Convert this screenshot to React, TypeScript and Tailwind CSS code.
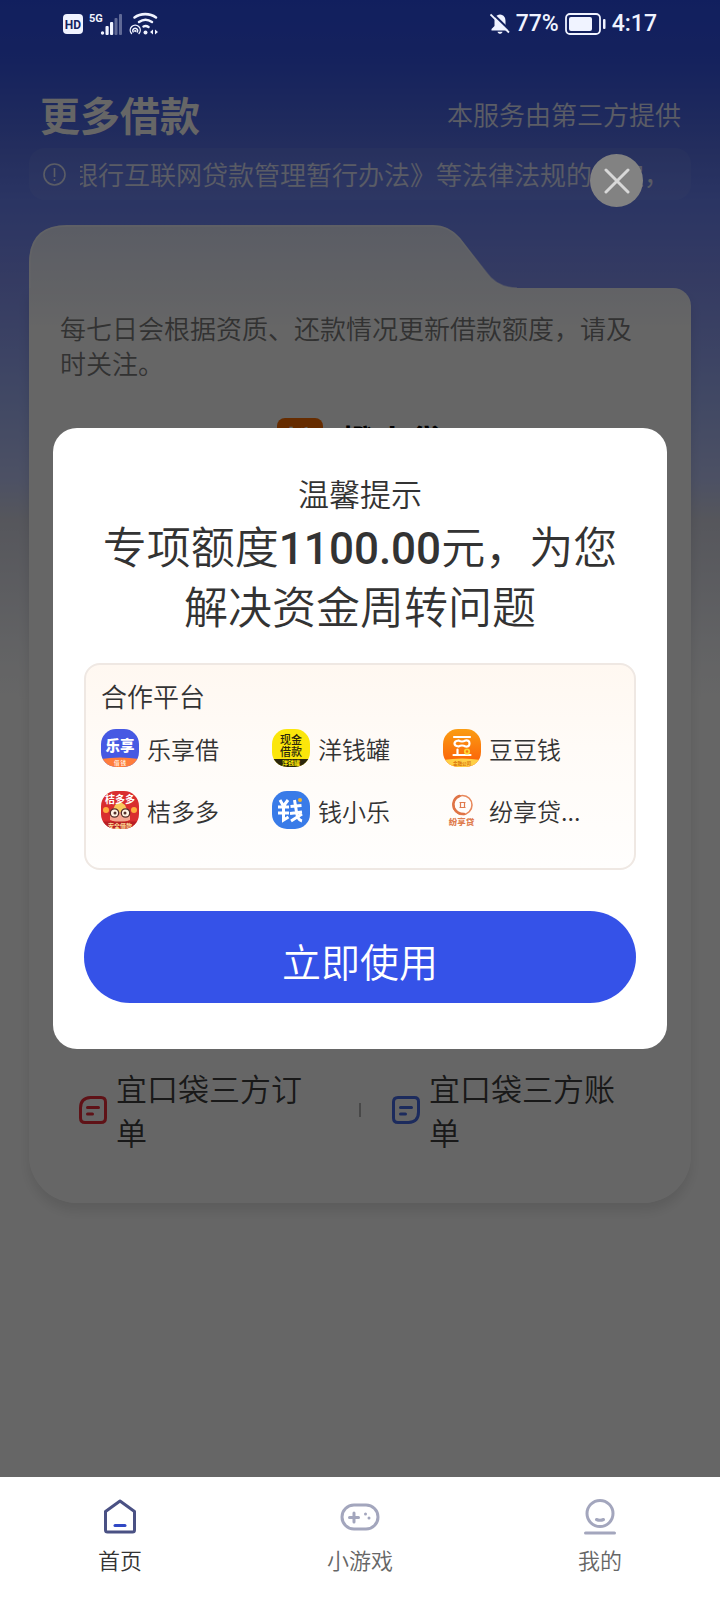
import React from "react";

const cjk = "font-['Noto_Sans_CJK_SC',sans-serif]";
const latin = "font-[Roboto,'Noto_Sans_CJK_SC',sans-serif]";

const svgFont = "'Noto Sans CJK SC', sans-serif";

function StatusBar() {
  return (
    <header className={`relative z-20 flex h-12 items-center justify-between px-[63px] text-[#f0f3ff] ${latin}`}>
      <div className="flex items-center gap-[6px]">
        <svg width="20" height="20" viewBox="0 0 20 20" aria-label="HD">
          <rect width="20" height="20" rx="4" fill="#f0f3ff" />
          <text x="10" y="14.500" fontFamily="Roboto, sans-serif" fontSize="12" fontWeight="700" textAnchor="middle" fill="#14225f">HD</text>
        </svg>
        <svg width="34" height="24" viewBox="0 0 34 24" aria-label="5G">
          <text x="0" y="10" fontFamily="Roboto, sans-serif" fontSize="11" fontWeight="700" fill="#f0f3ff">5G</text>
          <circle cx="13.500" cy="21" r="1.700" fill="#f0f3ff" />
          <g fill="#f0f3ff">
            <rect x="16.500" y="14" width="3.200" height="9" rx="1" />
            <rect x="21" y="10" width="3.200" height="13" rx="1" />
            <rect x="25.500" y="6" width="3" height="17" rx="1" opacity=".35" />
            <rect x="30" y="2" width="3" height="21" rx="1" opacity=".35" />
          </g>
        </svg>
        <svg width="30" height="24" viewBox="0 0 30 24" fill="none" stroke="#f0f3ff" strokeLinecap="round" aria-label="Wi-Fi">
          <path d="M5.500 5.500c6-4.500 15.500-4.500 21.500 0" strokeWidth="2.600" />
          <path d="M10 10c4-2.800 9-2.800 13 0M14.500 14.500c1.700-.9 3.500-.6 5 .5" strokeWidth="2.500" />
          <path d="M2.500 21.500a5 5 0 1 1 7.500 0M4.200 20a2.400 2.400 0 1 1 4 0" strokeWidth="1.400" />
          <circle cx="6.200" cy="19" r=".7" fill="#f0f3ff" />
          <circle cx="16.500" cy="20.500" r="2" fill="#f0f3ff" stroke="none" />
          <path d="M24 17.500v5l-3-2.500zM26 17.500v5l3-2.500z" fill="#f0f3ff" stroke="none" />
        </svg>
      </div>
      <div className="flex items-center gap-[6px] text-[23px] font-medium leading-6">
        <svg width="20" height="22" viewBox="0 0 20 22" aria-label="静音">
          <path d="M10 1.500c4 .5 5.500 3 5.500 6.500v5l2.500 3v1.500H1.500V16L4.500 13V8C4.500 4.500 6 2 10 1.500z" fill="#f0f3ff" />
          <path d="M7.500 18.800h5c-.7 2.700-4.300 2.700-5 0z" fill="#f0f3ff" />
          <path d="M2 0 20.500 18" stroke="#14225f" strokeWidth="2.200" />
          <path d="M.5 1.500 19 19.500" stroke="#f0f3ff" strokeWidth="1.800" />
        </svg>
        <span>77%</span>
        <svg width="41" height="22" viewBox="0 0 41 22" aria-label="电量">
          <rect x="1" y="1" width="34" height="20" rx="4" fill="none" stroke="#f0f3ff" strokeWidth="1.800" />
          <rect x="4" y="4" width="23" height="14" rx="2" fill="#f0f3ff" />
          <rect x="38" y="6" width="2.500" height="10" rx="1" fill="#f0f3ff" />
        </svg>
        <span>4:17</span>
      </div>
    </header>
  );
}

function NoticeBar() {
  return (
    <div className="mx-[29px] mt-[7px] flex h-[52px] items-center rounded-[16px] bg-white/5 pl-[14px] pr-6 text-white/80">
      <svg className="shrink-0" width="23" height="23" viewBox="0 0 23 23" fill="none" stroke="currentColor" strokeWidth="1.600">
        <circle cx="11.500" cy="11.500" r="10.500" />
        <path d="M11.500 5v9M11.500 16v2" />
      </svg>
      <div className="ml-[14px] flex-1 overflow-hidden whitespace-nowrap text-[26px] leading-[38px]">
        <p className="-ml-2">银行互联网贷款管理暂行办法》等法律法规的规定，</p>
      </div>
    </div>
  );
}

function OrderIcon({ mirrored = false, color }: { mirrored?: boolean; color: string }) {
  return (
    <svg className="shrink-0" width="28" height="28" viewBox="0 0 28 28" fill="none" stroke={color} strokeWidth="3" strokeLinecap="round">
      {mirrored ? (
        <path d="M6 1.500h16.500q4 0 4 4V16q0 10-10 10.500H6q-4.500 0-4.500-4.500V6Q1.500 1.500 6 1.500z" />
      ) : (
        <path d="M11.500 1.500H22q4.500 0 4.500 4.500v16q0 4.500-4.500 4.500H6q-4.500 0-4.500-4.500V12q0-10 10-10.500z" />
      )}
      <path d="M8.500 11.500h11M8.500 18h5" />
    </svg>
  );
}

function LoanCard() {
  return (
    <section className="mx-[29px] mt-[25px]">
      <svg className="block h-[63px] w-full" viewBox="0 0 662 63" preserveAspectRatio="none">
        <defs>
          <linearGradient id="tab" gradientUnits="userSpaceOnUse" x1="0" y1="0" x2="0" y2="105">
            <stop offset="0" stopColor="#e2e7fb" />
            <stop offset="1" stopColor="#ffffff" />
          </linearGradient>
        </defs>
        <path d="M0 63V38Q0 0 38 0H404Q420 0 431 13L457 47Q468 63 488 63Z" fill="url(#tab)" />
        <path d="M1 63V38Q1 1 38 1H404Q420 1 431 14L457 47Q468 63 488 63" fill="none" stroke="#fff" strokeOpacity=".5" strokeWidth="1.500" />
      </svg>
      <div className="flex h-[915px] flex-col rounded-b-[48px] rounded-tr-[18px] bg-[linear-gradient(#f3f5fd,#fff_42px)] px-[31px] pt-[22px] shadow-[0_8px_12px_rgba(0,0,0,0.1)]">
        <p className="pr-3 text-[26px] leading-[35px] text-[#7d7d7d]">每七日会根据资质、还款情况更新借款额度，请及时关注。</p>
        <div className="mt-[38px] flex items-center justify-center gap-[18px]">
          <svg width="46" height="46" viewBox="0 0 46 46">
            <rect width="46" height="46" rx="8" fill="#ff6f00" />
            <text x="23" y="34" fontFamily={svgFont} fontSize="30" fontWeight="700" textAnchor="middle" fill="#fff">橙</text>
          </svg>
          <h2 className="text-[34px] font-bold leading-[40px] text-black">橙小贷</h2>
        </div>
        <div className="mb-[49px] mt-auto flex items-center pl-[19px] text-[31px] leading-[44px] text-[#404040]">
          <a href="#orders" className="flex w-[280px] items-center gap-[9px]">
            <OrderIcon color="#ee2e3a" />
            <span className="w-[188px]">宜口袋三方订单</span>
          </a>
          <span className="mr-[31px] h-[14px] w-[2px] bg-[#b5b5b5]" />
          <a href="#bills" className="flex items-center gap-[9px]">
            <OrderIcon mirrored color="#466be8" />
            <span className="w-[188px]">宜口袋三方账单</span>
          </a>
        </div>
      </div>
    </section>
  );
}

const logos: Record<string, React.ReactNode> = {
  lexiang: (
    <>
      <rect width="38" height="38" fill="#4659e3" />
      <path d="M0 30q19-3 38 0v8H0z" fill="#ff7d3c" />
      <text x="19" y="22" fontSize="14.500" fontWeight="900" fill="#fff">乐享</text>
      <text x="19" y="36" fontSize="5.500" fontWeight="700" fill="#ffe8d8">借 钱</text>
    </>
  ),
  yang: (
    <>
      <rect width="38" height="38" fill="#fbe60b" />
      <rect y="30" width="38" height="8" fill="#2b260c" />
      <text x="19" y="14.500" fontSize="11" fontWeight="500" fill="#2b260c">现金</text>
      <text x="19" y="27" fontSize="11" fontWeight="500" fill="#2b260c">借款</text>
      <text x="19" y="36" fontSize="6" fontWeight="700" fill="#fbe60b">洋钱罐</text>
    </>
  ),
  dou: (
    <>
      <defs>
        <linearGradient id="dou" x1="0" y1="0" x2="0" y2="1">
          <stop offset="0" stopColor="#fb9d12" />
          <stop offset="1" stopColor="#fb5b08" />
        </linearGradient>
      </defs>
      <rect width="38" height="38" fill="url(#dou)" />
      <path d="M0 31q19-3 38 0v7H0z" fill="#ffcf45" />
      <g fill="none" stroke="#fff" strokeWidth="2.200" strokeLinecap="round">
        <path d="M11 8h16M10.500 26h17M14.500 20.500v5" />
        <path d="M15.500 11.500q3.500 2 7 0 4-.5 4 3t-4 3q-3.500-2-7 0-4-.5-4-3t4-3z" />
      </g>
      <circle cx="24" cy="22.500" r="2.200" fill="#fb7a0c" stroke="#ffd22e" strokeWidth="1.800" />
      <text x="19" y="36" fontSize="4.500" fontWeight="700" fill="#d9740a">金融公司</text>
    </>
  ),
  jie: (
    <>
      <rect width="38" height="38" fill="#d92d2f" />
      <circle cx="5" cy="19" r="3" fill="#ffab3d" />
      <circle cx="33" cy="19" r="3" fill="#ffab3d" />
      <path d="M14 14q5-5 10 0l5 12q0 5-10 5T9 26z" fill="#f8c95c" />
      <path d="M9 25q10-8 20 0v4q-10 4-20 0z" fill="#f6a58f" />
      <text x="19" y="12" fontSize="10" fontWeight="700" fill="#fff">桔多多</text>
      <g fill="#fff3e4" stroke="#56302a" strokeWidth="1.300">
        <circle cx="13.500" cy="22" r="4.200" />
        <circle cx="24.500" cy="22" r="4.200" />
      </g>
      <circle cx="14" cy="22" r="1.500" fill="#56302a" />
      <circle cx="24" cy="22" r="1.500" fill="#56302a" />
      <path d="M0 30.500h38V38H0z" fill="#b91f24" />
      <text x="19" y="36.500" fontSize="6" fontWeight="700" fill="#ffe29c">安全借款</text>
    </>
  ),
  qian: (
    <>
      <rect width="38" height="38" fill="#397be8" />
      <g fill="none" stroke="#fff" strokeWidth="3">
        <path d="M8 9l3.500 6L16 9M6 16h11M6 22h11M11.500 15v14l5-3" />
        <path d="M18.500 15.500l11-1M18 22.500l12-1.500M22.500 9l2 12q1 8 5.500 9M30 23l-11 7" />
      </g>
      <circle cx="28" cy="9" r="2" fill="#f5b72d" />
    </>
  ),
  fen: (
    <>
      <circle cx="19.500" cy="14" r="9.500" fill="none" stroke="#e8895c" strokeWidth="1.600" />
      <path d="M16.500 5a9 9 0 0 0-5.500 12q3 6 10 6" fill="none" stroke="#df7446" strokeWidth="2.600" strokeLinecap="round" />
      <path d="M16.500 11.500h6M16.500 16.500h6M17.500 11.500v5M21.500 11.500v5" stroke="#e07a4c" strokeWidth="1.200" />
      <text x="18.500" y="33.500" fontSize="8.500" fontWeight="900" fill="#df7d50">纷享贷</text>
    </>
  ),
};

const partners = [
  { id: "lexiang", name: "乐享借" },
  { id: "yang", name: "洋钱罐" },
  { id: "dou", name: "豆豆钱" },
  { id: "jie", name: "桔多多" },
  { id: "qian", name: "钱小乐" },
  { id: "fen", name: "纷享贷..." },
];

function PromoDialog() {
  return (
    <div role="dialog" aria-modal="true" aria-labelledby="promo-title" className="relative w-full rounded-[24px] bg-white px-[31px] pb-[46px] pt-[43px] text-[#333]">
      <button type="button" aria-label="关闭" className="absolute -top-[274px] right-6 flex size-[53px] items-center justify-center rounded-full bg-[#828282]">
        <svg width="26" height="26" viewBox="0 0 26 26" stroke="#d8d8d8" strokeWidth="3" strokeLinecap="round">
          <path d="M2 2l22 22M24 2L2 24" />
        </svg>
      </button>
      <h1 id="promo-title" className="text-center text-[31px] leading-[44px]">温馨提示</h1>
      <p className="text-center text-[44px] leading-[60px]">
        专项额度<span className="font-[Roboto,sans-serif] font-medium leading-[44px]">1100.00</span>元，为您
        <br />
        解决资金周转问题
      </p>
      <section className="mt-[28px] h-[207px] rounded-[16px] border-2 border-[#efe8e3] bg-[linear-gradient(#fff8f1,#fffbf7_40%,#fffefd)] pl-[15px] pr-5 pt-3">
        <h2 className="text-[26px] leading-[38px]">合作平台</h2>
        <ul className="mt-[14px] grid grid-cols-3 gap-y-6">
          {partners.map((p) => (
            <li key={p.id} className="flex h-[38px] items-center gap-2 text-[24px] leading-[38px]">
              <svg className="shrink-0 rounded-[15px]" width="38" height="38" viewBox="0 0 38 38" fontFamily={svgFont} textAnchor="middle">
                {logos[p.id]}
              </svg>
              <span className="whitespace-nowrap pt-[2px]">{p.name}</span>
            </li>
          ))}
        </ul>
      </section>
      <button type="button" className="mt-[41px] h-[92px] w-full rounded-full bg-[#3552e8] pt-[6px] text-[39px] leading-[56px] text-white">立即使用</button>
    </div>
  );
}

function TabBar() {
  return (
    <nav className="flex h-[123px] shrink-0 bg-white text-[22px] leading-8 text-[#666]">
      <a href="#home" aria-current="page" className="flex flex-1 flex-col items-center gap-[5px] pt-[21px] text-[#333]">
        <svg width="40" height="40" viewBox="0 0 40 40" fill="none" strokeWidth="3" strokeLinecap="round" strokeLinejoin="round">
          <path d="M20 3l14.500 10.500V32q0 2-2 2h-25q-2 0-2-2V13.500z" stroke="#4a5184" />
          <path d="M15 27.500h10" stroke="#3048c4" />
        </svg>
        首页
      </a>
      <a href="#games" className="flex flex-1 flex-col items-center gap-[5px] pt-[21px]">
        <svg width="40" height="40" viewBox="0 0 40 40" fill="none" stroke="#a3a6bd" strokeWidth="3" strokeLinecap="round">
          <rect x="2" y="7" width="36" height="24" rx="12" />
          <path d="M14 15v9M9.500 19.500h9" />
          <circle cx="25.500" cy="16" r="1.500" fill="#a3a6bd" stroke="none" />
          <circle cx="29" cy="20" r="1.500" fill="#a3a6bd" stroke="none" />
        </svg>
        小游戏
      </a>
      <a href="#me" className="flex flex-1 flex-col items-center gap-[5px] pt-[21px]">
        <svg width="40" height="40" viewBox="0 0 40 40" fill="none" stroke="#a3a6bd" strokeWidth="3" strokeLinecap="round">
          <circle cx="20" cy="15.500" r="13" />
          <path d="M16.500 21.500q3.500 1.500 7 0M5.500 35h29" />
        </svg>
        我的
      </a>
    </nav>
  );
}

export default function App() {
  return (
    <div className={`flex min-h-screen flex-col font-[350] ${cjk}`}>
      <main className="relative flex-1 bg-[linear-gradient(#2c4fec_0px,#3555e8_60px,#5a73ea_150px,#6b84f8_200px,#8494f6_280px,#a3b5fb_400px,#bfcafa_480px,#d6d8e6_520px,#f6f7fb_650px,#fff_700px)]">
        <StatusBar />
        <div className="flex items-center justify-between pl-10 pr-[39px] pt-[39px] text-white">
          <h1 className="text-[40px] font-bold leading-[54px]">更多借款</h1>
          <span className="text-[26px] leading-[54px] text-white/85">本服务由第三方提供</span>
        </div>
        <NoticeBar />
        <LoanCard />
        <div className="absolute inset-0 z-10 flex items-center bg-black/60 px-[53px]">
          <PromoDialog />
        </div>
      </main>
      <TabBar />
    </div>
  );
}
